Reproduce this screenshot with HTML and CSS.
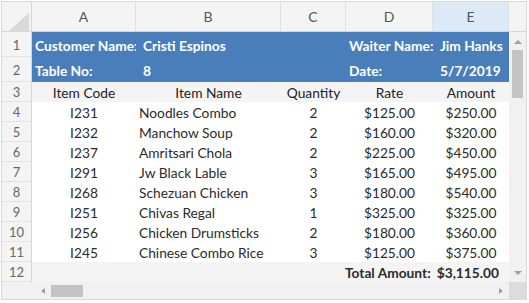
FILE: index.html
```html
<!DOCTYPE html>
<html lang="en">
  <head>
    <meta charset="UTF-8" />
    <title>Restaurant Bill</title>
    <link rel="stylesheet" href="styles.css">
  </head>
  <body>
    <div class="sheet">
      <div class="vscroll">
        <span class="arrow up"></span>
        <span class="vthumb"></span>
        <span class="fill"></span>
        <span class="arrow down"></span>
      </div>

      <!-- column headers -->
      <div class="colhead corner">
        <svg width="26" height="22" viewBox="0 0 26 22"><polygon points="24,4 24,22 4,22" fill="#d9d9d9"/></svg>
      </div>
      <div class="colhead">A</div>
      <div class="colhead">B</div>
      <div class="colhead">C</div>
      <div class="colhead">D</div>
      <div class="colhead active">E</div>
      <div class="colhead blank"></div>

      <!-- row 1 -->
      <div class="rowhead tall">1</div>
      <div class="cell info label">Customer Name:</div>
      <div class="cell info value">Cristi Espinos</div>
      <div class="cell info"></div>
      <div class="cell info label">Waiter Name:</div>
      <div class="cell info value">Jim Hanks</div>

      <!-- row 2 -->
      <div class="rowhead tall">2</div>
      <div class="cell info label">Table No:</div>
      <div class="cell info value">8</div>
      <div class="cell info"></div>
      <div class="cell info label">Date:</div>
      <div class="cell info value">5/7/2019</div>

      <!-- row 3 -->
      <div class="rowhead">3</div>
      <div class="cell title">Item Code</div>
      <div class="cell title">Item Name</div>
      <div class="cell title">Quantity</div>
      <div class="cell title">Rate</div>
      <div class="cell title">Amount</div>

      <div class="rowhead">4</div>
      <div class="cell mid">I231</div>
      <div class="cell name">Noodles Combo</div>
      <div class="cell mid">2</div>
      <div class="cell mid">$125.00</div>
      <div class="cell mid">$250.00</div>

      <div class="rowhead">5</div>
      <div class="cell mid">I232</div>
      <div class="cell name">Manchow Soup</div>
      <div class="cell mid">2</div>
      <div class="cell mid">$160.00</div>
      <div class="cell mid">$320.00</div>

      <div class="rowhead">6</div>
      <div class="cell mid">I237</div>
      <div class="cell name">Amritsari Chola</div>
      <div class="cell mid">2</div>
      <div class="cell mid">$225.00</div>
      <div class="cell mid">$450.00</div>

      <div class="rowhead">7</div>
      <div class="cell mid">I291</div>
      <div class="cell name">Jw Black Lable</div>
      <div class="cell mid">3</div>
      <div class="cell mid">$165.00</div>
      <div class="cell mid">$495.00</div>

      <div class="rowhead">8</div>
      <div class="cell mid">I268</div>
      <div class="cell name">Schezuan Chicken</div>
      <div class="cell mid">3</div>
      <div class="cell mid">$180.00</div>
      <div class="cell mid">$540.00</div>

      <div class="rowhead">9</div>
      <div class="cell mid">I251</div>
      <div class="cell name">Chivas Regal</div>
      <div class="cell mid">1</div>
      <div class="cell mid">$325.00</div>
      <div class="cell mid">$325.00</div>

      <div class="rowhead">10</div>
      <div class="cell mid">I256</div>
      <div class="cell name">Chicken Drumsticks</div>
      <div class="cell mid">2</div>
      <div class="cell mid">$180.00</div>
      <div class="cell mid">$360.00</div>

      <div class="rowhead">11</div>
      <div class="cell mid">I245</div>
      <div class="cell name">Chinese Combo Rice</div>
      <div class="cell mid">3</div>
      <div class="cell mid">$125.00</div>
      <div class="cell mid">$375.00</div>

      <!-- row 12 -->
      <div class="rowhead">12</div>
      <div class="cell foot"></div>
      <div class="cell foot"></div>
      <div class="cell foot"></div>
      <div class="cell foot total"><span>Total Amount:</span><span>$3,115.00</span></div>

      <!-- horizontal scrollbar -->
      <div class="hscroll">
        <span class="arrow left"></span>
        <span class="hthumb"></span>
        <span class="fill"></span>
        <span class="arrow right"></span>
      </div>
      <div class="scorner"></div>
    </div>
  </body>
</html>
```

FILE: styles.css
```css
body {
  margin: 0;
  background: #fff;
  font-family: Lato, "Noto Sans", sans-serif;
  font-size: 13.75px;
  color: #2b2b2b;
}

.sheet {
  margin: 1px;
  width: max-content;
  display: grid;
  grid-template-columns: 30px 104px 145px 65px 87px 76px 17px;
  grid-template-rows: 30px 25px 25px repeat(10, 20px) 17px;
  border: 1px solid #d9d9d9;
}

/* headers */
.colhead {
  background: #f4f4f4;
  border-right: 1px solid #e0e0e0;
  border-bottom: 1px solid #d6d6d6;
  display: flex;
  justify-content: center;
  align-items: center;
  color: #555;
  font-size: 14px;
}

.colhead.corner {
  align-items: flex-end;
  justify-content: flex-end;
  border-right: 1px solid #d6d6d6;
}

.colhead.corner svg {
  display: block;
}

.colhead.active {
  background: #dceaf7;
}

.colhead.blank {
  border-right: none;
}

.rowhead {
  background: #f4f4f4;
  border-right: 1px solid #d6d6d6;
  border-bottom: 1px solid #e3e3e3;
  display: flex;
  justify-content: center;
  align-items: flex-end;
  color: #666;
  font-size: 13px;
  line-height: 18px;
}

.rowhead.tall {
  padding-bottom: 2px;
}

/* cells */
.cell {
  display: flex;
  align-items: flex-end;
  white-space: nowrap;
  line-height: 18px;
}

.cell.info {
  background: #4a7ebb;
  color: #fff;
  font-weight: bold;
  padding-bottom: 2px;
}

.cell.label {
  padding-left: 3px;
}

.cell.value {
  padding-left: 7px;
}

.cell.title {
  background: #f4f4f4;
  justify-content: center;
  color: #222;
}

.cell.mid {
  justify-content: center;
}

.cell.name {
  padding-left: 3px;
}

.cell.foot {
  background: #f4f4f4;
}

.cell.total {
  grid-column: span 2;
  justify-content: flex-end;
  gap: 6px;
  padding-right: 10px;
  font-weight: bold;
}

/* scrollbars */
.vscroll {
  grid-column: 7;
  grid-row: 2 / 14;
  background: #f1f1f1;
  display: flex;
  flex-direction: column;
  align-items: center;
  padding: 8px 0 7px;
}

.vthumb {
  width: 11px;
  height: 48px;
  margin-top: 6px;
  background: #c4c4c4;
}

.fill {
  flex: 1;
}

.hscroll {
  grid-column: 1 / 7;
  background: #f1f1f1;
  display: flex;
  align-items: center;
  padding: 0 6px 0 39px;
}

.hthumb {
  width: 32px;
  height: 12px;
  margin-left: 6px;
  background: #c4c4c4;
}

.scorner {
  background: #dcdcdc;
}

.arrow {
  width: 0;
  height: 0;
  border: 4px solid transparent;
}

.arrow.up {
  border-top: none;
  border-bottom-color: #a0a0a0;
}

.arrow.down {
  border-bottom: none;
  border-top-color: #a0a0a0;
}

.arrow.left {
  border-width: 3px;
  border-left: none;
  border-right: 4px solid #a0a0a0;
}

.arrow.right {
  border-width: 3px;
  border-right: none;
  border-left: 4px solid #a0a0a0;
}
```
